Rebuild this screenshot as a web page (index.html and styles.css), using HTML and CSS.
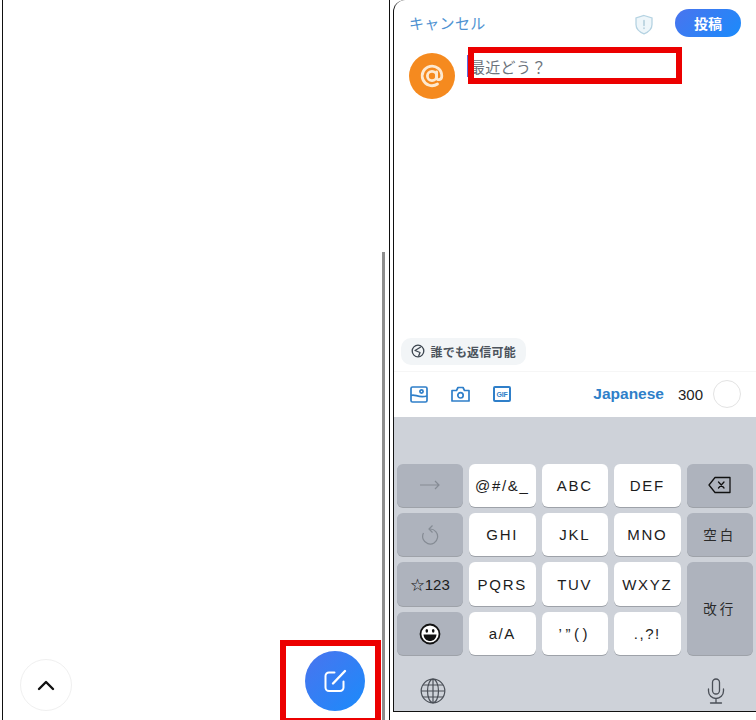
FILE: index.html
```html
<!DOCTYPE html>
<html lang="ja">
<head>
<meta charset="utf-8">
<title>投稿</title>
<link rel="stylesheet" href="styles.css">
</head>
<body>
<div class="shot">
  <section class="feed">
    <div class="scrollbar"></div>
    <button class="top-btn" aria-label="top">
      <svg width="18" height="12" viewBox="0 0 18 12"><path d="M2 10 L9 3 L16 10" fill="none" stroke="#111" stroke-width="2.4" stroke-linecap="round" stroke-linejoin="round"/></svg>
    </button>
    <button class="fab" aria-label="new">
      <svg width="26" height="26" viewBox="0 0 26 26" fill="none" stroke="#fff" stroke-width="2" stroke-linecap="round" stroke-linejoin="round"><path d="M12.5 4.5H7a3.5 3.5 0 0 0-3.500 3.500V19.500A3.500 3.500 0 0 0 7 23H18A3.500 3.500 0 0 0 21.500 19.500V13.500"/><path d="M11 15.500 L23 3" stroke-width="2.400"/></svg>
    </button>
    <div class="mark mark-fab"></div>
  </section>

  <section class="composer">
    <header class="head">
      <span class="cancel">キャンセル</span>
      <svg class="shield" width="20" height="21" viewBox="0 0 20 21" fill="#eef6fa" stroke="#b5d3e2" stroke-width="1.300"><path d="M10 1.500 L18 4 V10.500 C18 15 14.500 18 10 19.800 C5.500 18 2 15 2 10.500 V4 Z"/><path d="M10 6.500V11.500M10 13.800V14.500" stroke="#a8c6d6" stroke-linecap="round"/></svg>
      <span class="post">投稿</span>
    </header>
    <div class="compose">
      <div class="avatar">
        <svg width="26" height="26" viewBox="0 0 26 26" fill="none" stroke="#fde9d0" stroke-width="2.800" stroke-linecap="round"><circle cx="13" cy="13" r="4.600"/><path d="M17.600 8.800V14.500C17.600 17.800 22.800 17.500 22.800 13A9.800 9.800 0 1 0 18.500 21"/></svg>
      </div>
      <div class="field"><span class="caret"></span><span class="placeholder">最近どう？</span></div>
      <div class="mark mark-field"></div>
    </div>
    <div class="chip-row">
      <span class="chip">
        <svg width="14" height="14" viewBox="0 0 14 14" fill="none" stroke="#3d4650" stroke-width="1.300" stroke-linejoin="round"><circle cx="7" cy="7" r="5.800"/><path d="M9.800 3 L4 6.500 L9 8.500 L7.500 12.500"/></svg>
        誰でも返信可能
      </span>
    </div>
    <div class="tools">
      <svg width="18" height="17" viewBox="0 0 18 17" fill="none" stroke="#2f7fc9" stroke-width="1.700"><rect x="1" y="1" width="16" height="15" rx="1.500"/><circle cx="11.500" cy="5.500" r="1.600"/><path d="M1 9.500C5 7.500 8 12.500 17 10"/></svg>
      <svg width="19" height="16" viewBox="0 0 19 16" fill="none" stroke="#2f7fc9" stroke-width="1.700" stroke-linejoin="round"><path d="M1 4.500H5.500L7 1.500H12L13.500 4.500H18V15H1Z"/><circle cx="9.500" cy="9.300" r="2.700"/></svg>
      <span class="gif"><span class="gif-text">GIF</span></span>
      <span class="spacer"></span>
      <span class="lang">Japanese</span>
      <span class="count">300</span>
      <span class="ring"></span>
    </div>
    <div class="keyboard">
      <div class="keys">
        <div class="key fn dim">
          <svg width="20" height="10" viewBox="0 0 20 10" fill="none" stroke="#858b94" stroke-width="1.200"><path d="M0 5H19M15 1L19 5L15 9"/></svg>
        </div>
        <div class="key">@#/&amp;_</div>
        <div class="key">ABC</div>
        <div class="key">DEF</div>
        <div class="key fn">
          <svg width="24" height="18" viewBox="0 0 24 18" fill="none" stroke="#111" stroke-width="1.300" stroke-linejoin="round"><path d="M7 1.500H22V16.500H7L1 9Z"/><path d="M10.500 6L16 12M16 6L10.500 12" stroke-linecap="round"/></svg>
        </div>
        <div class="key fn dim">
          <svg width="18" height="21" viewBox="0 0 18 21" fill="none" stroke="#858b94" stroke-width="1.200" stroke-linejoin="round"><path d="M9 5A7.500 7.500 0 1 1 2.500 9"/><path d="M11.500 1.500L8 5L11.500 8.500"/></svg>
        </div>
        <div class="key">GHI</div>
        <div class="key">JKL</div>
        <div class="key">MNO</div>
        <div class="key fn cjk">空白</div>
        <div class="key fn sym">☆123</div>
        <div class="key">PQRS</div>
        <div class="key">TUV</div>
        <div class="key">WXYZ</div>
        <div class="key fn cjk tall">改行</div>
        <div class="key fn">
          <svg width="22" height="22" viewBox="0 0 22 22"><circle cx="11" cy="11" r="9.500" fill="#fff" stroke="#111" stroke-width="1.800"/><ellipse cx="7.800" cy="7.800" rx="1.300" ry="1.900" fill="#111"/><ellipse cx="14.200" cy="7.800" rx="1.300" ry="1.900" fill="#111"/><path d="M4.500 11.500H17.500C17.200 16 14 18 11 18C8 18 4.800 16 4.500 11.500Z" fill="#111"/></svg>
        </div>
        <div class="key small">a/A</div>
        <div class="key small wide">’”()</div>
        <div class="key small">.,?!</div>
      </div>
      <div class="kb-foot">
        <svg width="26" height="26" viewBox="0 0 26 26" fill="none" stroke="#4a4f57" stroke-width="1.200"><circle cx="13" cy="13" r="11.800"/><ellipse cx="13" cy="13" rx="5.500" ry="11.800"/><path d="M13 1.200V24.800M1.200 13H24.800M3 7H23M3 19H23"/></svg>
        <svg width="18" height="26" viewBox="0 0 18 26" fill="none" stroke="#4a4f57" stroke-width="1.300" stroke-linecap="round"><rect x="5.500" y="1" width="7" height="15" rx="3.500"/><path d="M1.500 11V13A7.500 7.500 0 0 0 16.500 13V11M9 20.500V25M3.500 25H14.500"/></svg>
      </div>
    </div>
  </section>
</div>
</body>
</html>
```

FILE: styles.css
```css
* { box-sizing: border-box; }
html, body { margin: 0; padding: 0; background: #fff; }
body { width: 756px; height: 720px; overflow: hidden; font-family: "Noto Sans CJK JP", "Liberation Sans", sans-serif; }
.shot { display: flex; width: 756px; height: 720px; align-items: flex-start; }

.feed { position: relative; flex: none; height: 720px; margin-left: 2px; width: 388px; border-left: 1.500px solid #111; border-right: 1.500px solid #111; }
.scrollbar { position: absolute; left: 378.500px; top: 252px; bottom: 0; width: 3px; background: #8d8d8d; }
.top-btn { position: absolute; left: 16.500px; top: 659px; width: 52px; height: 52px; padding: 0; display: flex; align-items: center; justify-content: center; background: #fff; border: 1px solid #f0f0f0; border-radius: 50%; }
.fab { position: absolute; left: 302px; top: 651px; width: 60px; height: 60px; padding: 0; display: flex; align-items: center; justify-content: center; border: 0; border-radius: 50%; background: linear-gradient(135deg, #4a74ee, #1b8bfb); }
.mark { position: absolute; border: 6px solid #ec0000; }
.mark-fab { left: 276.500px; top: 640px; width: 101px; height: 84px; }

.composer { flex: none; width: 363px; height: 711.500px; margin-left: 3px; display: flex; flex-direction: column; border-left: 1.500px solid #111; border-bottom: 1.500px solid #111; border-top-left-radius: 12px; border-top-right-radius: 12px; overflow: hidden; }
.head { flex: none; height: 47px; padding: 9px 15px 0 15px; display: flex; align-items: flex-start; }
.cancel { margin-top: 2px; flex: 1; font-size: 15px; line-height: 24px; color: #4f93d2; letter-spacing: .3px; }
.shield { margin: 5px 21px 0 0; }
.post { width: 66px; height: 28px; border-radius: 14px; background: linear-gradient(135deg, #4a74ee, #1b8bfb); color: #fff; font-size: 14px; font-weight: 700; line-height: 28px; text-align: center; }

.compose { position: relative; flex: 1; padding: 6px 0 0 15px; display: flex; align-items: flex-start; }
.avatar { flex: none; width: 46px; height: 46px; border-radius: 50%; background: #f58a1f; display: flex; align-items: center; justify-content: center; }
.field { margin-left: 12px; display: flex; align-items: flex-start; }
.caret { width: 2px; height: 22px; margin-top: 2px; background: #5d6be0; }
.placeholder { margin-left: 1px; margin-top: 2px; font-size: 15px; line-height: 24px; color: #6c737b; letter-spacing: .3px; }
.mark-field { left: 73.500px; top: 0; width: 214px; height: 37px; }

.chip-row { flex: none; height: 33px; padding-left: 7px; }
.chip { display: inline-flex; align-items: center; gap: 6px; height: 27px; width: 125px; padding-left: 9.500px; border-radius: 10px; background: #f2f5f7; color: #4b535c; font-size: 12px; font-weight: 700; white-space: nowrap; letter-spacing: .2px; }

.tools { flex: none; height: 46px; padding: 0 15px 0 16px; display: flex; align-items: center; gap: 23px; border-top: 1px solid #f6f6f6; }
.gif { width: 18px; height: 16px; border: 2px solid #2f7fc9; border-radius: 2px; display: flex; align-items: center; justify-content: center; overflow: hidden; }
.gif-text { font: 700 7px/1 "Liberation Sans", sans-serif; color: #2f7fc9; letter-spacing: -.2px; }
.spacer { flex: 1; margin-right: -23px; }
.lang { font: 700 15.500px/1 "Liberation Sans", sans-serif; color: #2f7fc9; margin-right: -9px; }
.count { font: 400 15px/1 "Liberation Sans", sans-serif; color: #222; margin-right: -13px; }
.ring { width: 28px; height: 28px; border-radius: 50%; border: 1px solid #e3e3e3; }

.keyboard { flex: none; height: 294px; display: flex; flex-direction: column; padding: 47px 0 0 2.500px; background: #ced2d9; }
.keys { flex: none; display: grid; grid-template-columns: repeat(5, 66.500px); grid-template-rows: 43.500px 43.500px 44px 43.500px; gap: 5.800px 6px; }
.key { display: flex; align-items: center; justify-content: center; border-radius: 6px; background: #fff; box-shadow: 0 1px 0 #9ea2a9; font: 400 15px/1 "Liberation Sans", sans-serif; letter-spacing: 1.700px; color: #1c1c1c; }
.key.fn { background: #aeb3bd; }
.key.small { font-size: 15px; letter-spacing: 1.500px; }
.key.wide { letter-spacing: 3.500px; }
.key.cjk { font-family: "Noto Sans CJK JP", sans-serif; font-size: 13.500px; letter-spacing: 3px; color: #2a2a2a; }
.key.sym { font-size: 15px; letter-spacing: 0; }
.key.tall { grid-column: 5; grid-row: 3 / span 2; }
.kb-foot { flex: 1; display: flex; align-items: center; justify-content: space-between; padding: 17px 31px 0 23.500px; }
```
